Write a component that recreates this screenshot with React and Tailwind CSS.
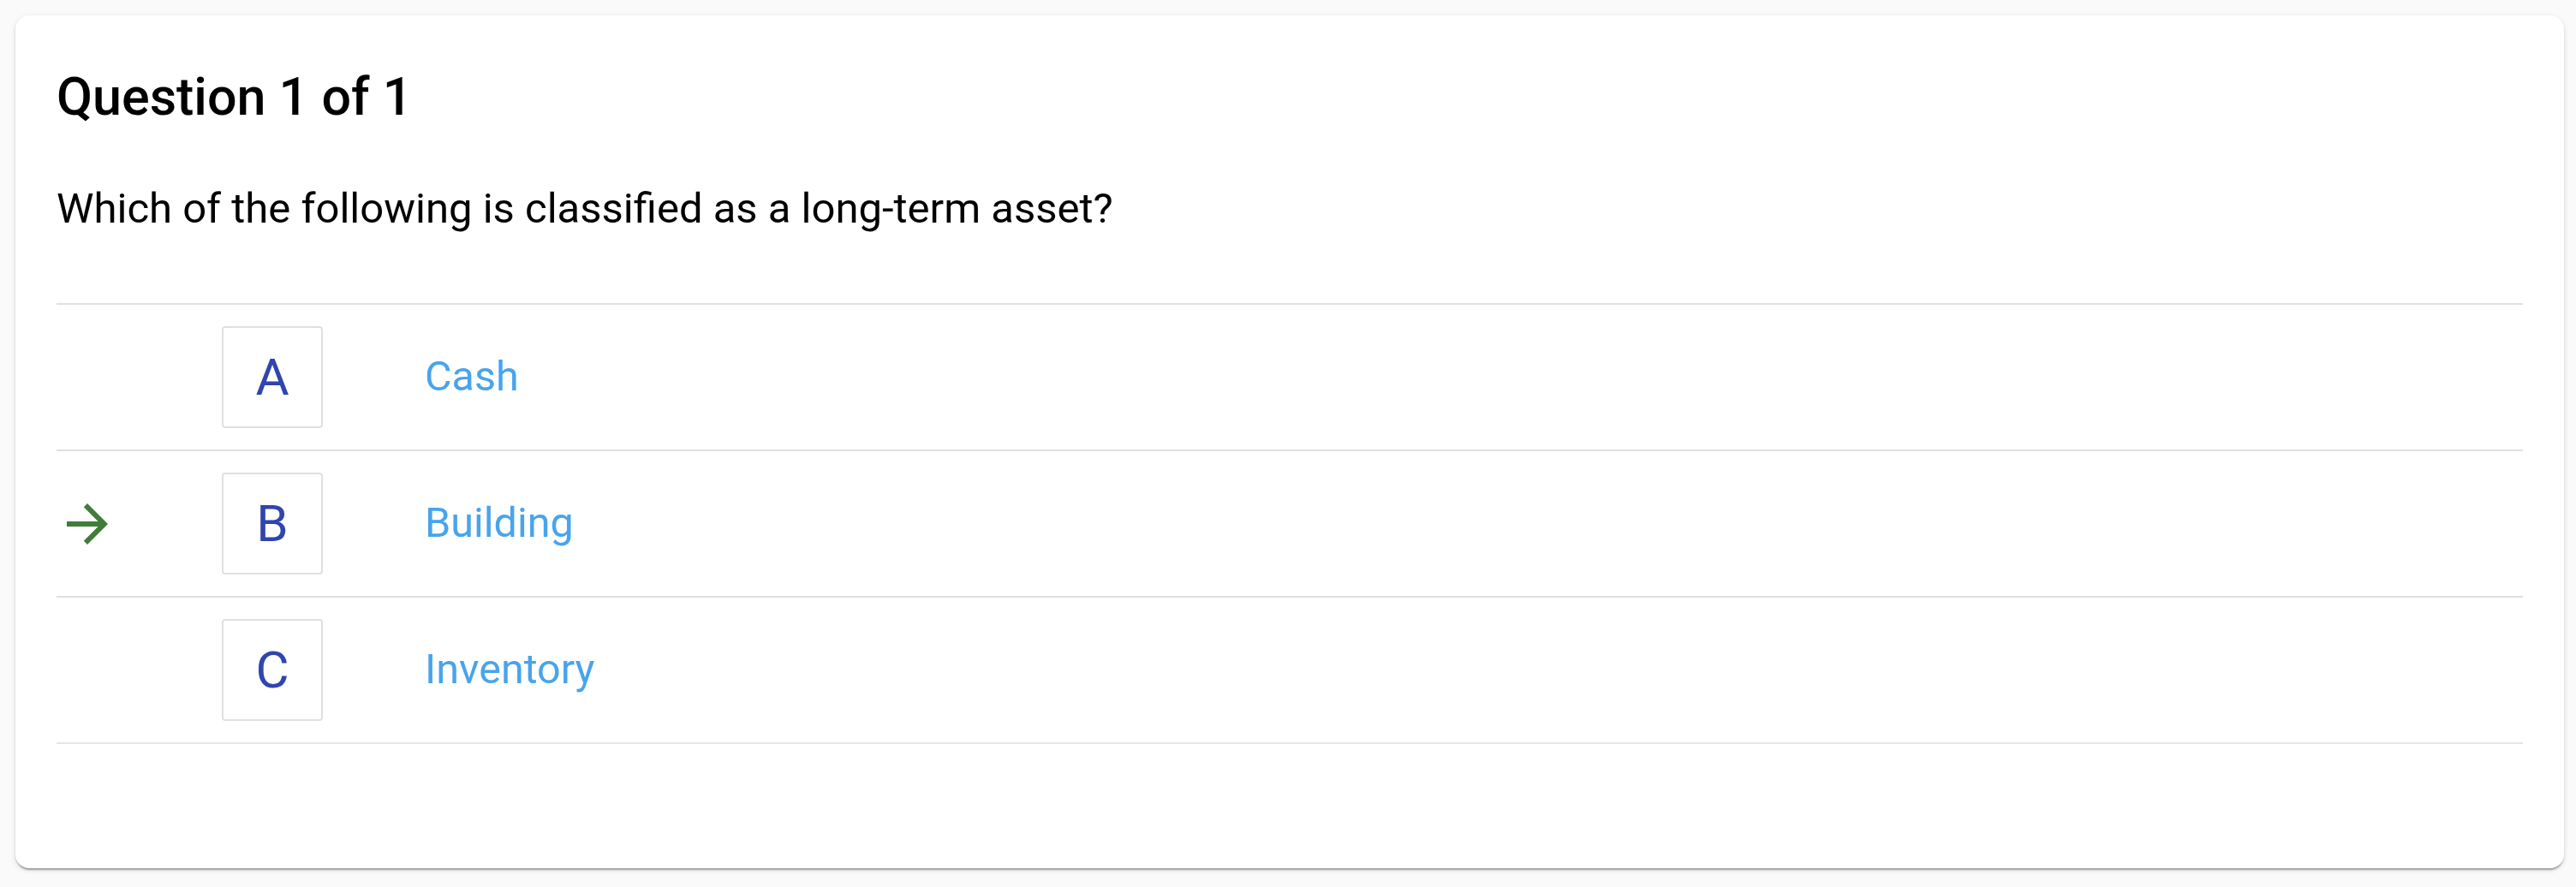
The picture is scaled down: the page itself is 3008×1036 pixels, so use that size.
import React from "react";

const options = [
  { letter: "A", text: "Cash" },
  { letter: "B", text: "Building", selected: true },
  { letter: "C", text: "Inventory" },
];

const ArrowIcon = () => (
  <svg viewBox="0 0 24 24" className="w-[72px] h-[72px]" fill="#3f7d39">
    <path d="M12 4l-1.41 1.41L16.17 11H4v2h12.17l-5.58 5.59L12 20l8-8z" />
  </svg>
);

const App = () => {
  return (
    <div
      className="min-h-screen bg-[#fafafa] pt-[18px] pl-[18px] pr-[14px] pb-[23px]"
      style={{ fontFamily: "Roboto, 'Liberation Sans', sans-serif" }}
    >
      <div className="bg-white rounded-[16px] shadow-[0_4px_2px_-2px_rgba(0,0,0,0.2),0_2px_2px_0_rgba(0,0,0,0.14),0_2px_6px_0_rgba(0,0,0,0.12)] px-[48px] pt-[59px] pb-[145px]">
        {/* header */}
        <h2 className="text-[61px] leading-[72px] font-medium text-black">
          Question 1 of 1
        </h2>
        <p className="mt-[66px] text-[49px] leading-[58px] text-black">
          Which of the following is classified as a long-term asset?
        </p>

        {/* answer list */}
        <div className="mt-[81px] border-b-2 border-[#e6e6e6]">
          {options.map((opt) => (
            <div
              key={opt.letter}
              className="flex items-center border-t-2 border-[#e0e0e0] py-[25px]"
            >
              <div className="w-[193px] flex items-center">
                {opt.selected && <ArrowIcon />}
              </div>
              <div className="w-[118px] h-[119px] border-2 border-[#e0e0e0] rounded-[4px] flex items-center justify-center text-[60px] text-[#3045ad]">
                {opt.letter}
              </div>
              <div className="ml-[119px] text-[48.5px] text-[#48a4ec]">
                {opt.text}
              </div>
            </div>
          ))}
        </div>
      </div>
    </div>
  );
};

export default App;
